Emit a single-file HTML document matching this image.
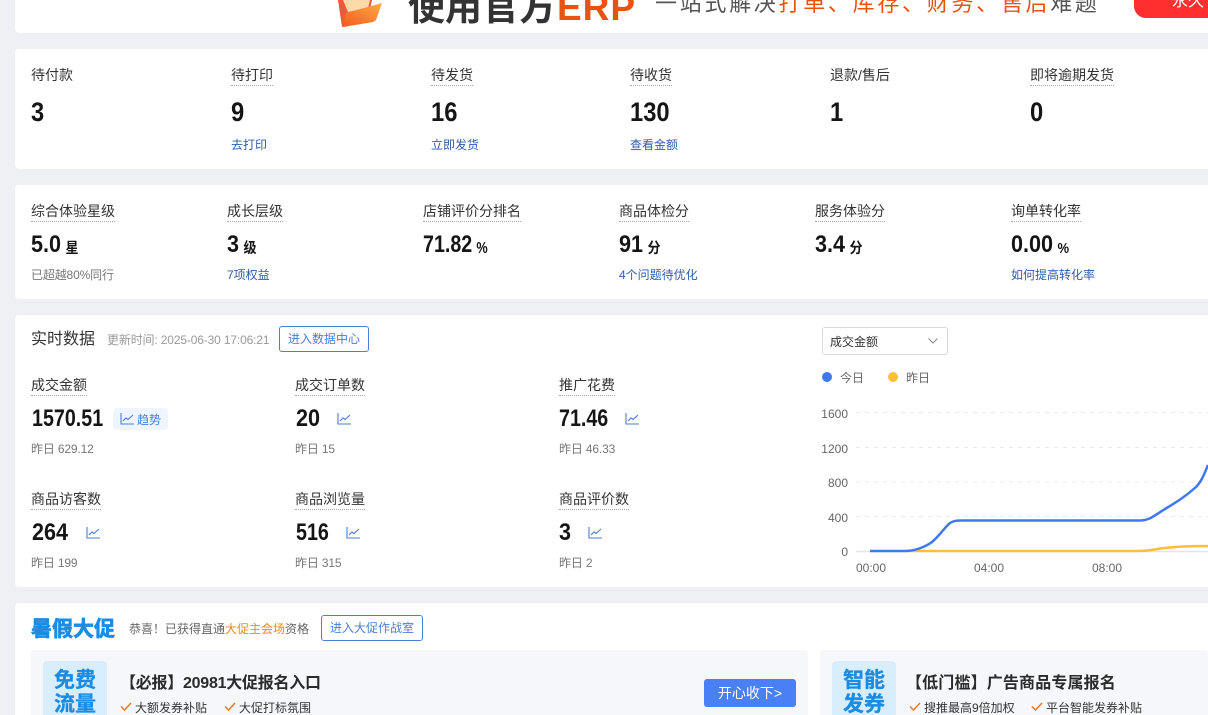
<!DOCTYPE html>
<html lang="zh"><head><meta charset="utf-8"><style>
html,body{margin:0;padding:0;width:1208px;height:715px;overflow:hidden;background:#eef0f3;font-family:"Liberation Sans","Noto Sans CJK SC",sans-serif;color:#333}
#root{position:relative;width:1208px;height:715px;overflow:hidden}
.card{position:absolute;left:15px;width:1200px;background:#fff;border-radius:4px}
.a{position:absolute;white-space:nowrap}
.l{position:absolute;white-space:nowrap;font-size:14px;line-height:18px;height:18px;color:#333;border-bottom:1px dotted #aaa;padding-bottom:1px}
.l.n{border-bottom:none}
.v{position:absolute;white-space:nowrap;font-weight:bold;font-size:27px;line-height:30px;color:#151515;transform:scaleX(.88);transform-origin:0 50%}
.v2{position:absolute;white-space:nowrap;font-weight:bold;font-size:24px;line-height:28px;color:#151515;transform:scaleX(.9);transform-origin:0 50%}
.v2 span{font-size:14.5px;margin-left:5px;position:relative;top:1px}
.nr{transform:scaleX(.82)}
.nr span{font-size:15.5px}
.lk{position:absolute;white-space:nowrap;font-size:12px;line-height:16px;color:#2f5ca8}
.g{position:absolute;white-space:nowrap;font-size:12px;line-height:16px;color:#777;letter-spacing:-.15px}
.btn{position:absolute;box-sizing:border-box;border:1px solid #4a7fd6;border-radius:3px;color:#4a7fd6;font-size:12px;text-align:center;background:#fff}
.tr{position:absolute;width:15px;height:13px}
.tag{position:absolute;width:64px;top:661px;height:60px;background:#d8eefc;border-radius:4px;color:#1b8ce3;font-weight:bold;font-size:21px;line-height:24px;text-align:center;padding-top:8px;box-sizing:content-box;-webkit-text-stroke:.3px #1b8ce3}
.sub{position:absolute;top:650px;height:70px;background:#f5f7fa;border-radius:3px}
.t{position:absolute;white-space:nowrap;font-size:16px;font-weight:bold;line-height:22px;color:#2b2b2b}
.ck{position:absolute;white-space:nowrap;font-size:12px;line-height:16px;color:#333}
</style></head><body><div id="root">

<div class="card" style="top:-10px;height:43px"></div>
<svg class="a" style="left:332px;top:0" width="55" height="30" viewBox="0 0 55 30"><defs><linearGradient id="f" x1="0" y1="1" x2="1" y2="0"><stop offset="0" stop-color="#f4591f"/><stop offset="1" stop-color="#fdab45"/></linearGradient></defs><path d="M6 0H40L38 10 14 14 10 27Z" fill="#ee5a3a"/><path d="M11 0H38L36 8 16 12Z" fill="#fbd9a8"/><path d="M14 13 50 3 44 20Q43 21 41 22L11 27Q10 27 10 26Z" fill="url(#f)"/></svg>
<div class="a" style="left:408px;top:-12px;font-size:37px;line-height:40px;font-weight:bold;color:#333">使用官方</div>
<div class="a" style="left:557px;top:-12px;font-size:37px;line-height:40px;font-weight:bold;color:#e8540f;letter-spacing:1px">ERP</div>
<div class="a" style="left:655px;top:-8px;font-size:22px;line-height:24px;color:#555;letter-spacing:2.7px">一站式解决<span style="color:#e8540f">打单、库存、财务、售后</span>难题</div>
<div class="a" style="left:1134px;top:-20px;width:90px;height:38px;background:#ff2f2f;border-radius:12px"></div>
<div class="a" style="left:1172px;top:-8px;font-size:16px;line-height:20px;color:#fff">永久</div>

<div class="card" style="top:49px;height:120px"></div>
<div class="l n" style="left:31px;top:66px">待付款</div>
<div class="l" style="left:231px;top:66px">待打印</div>
<div class="l" style="left:431px;top:66px">待发货</div>
<div class="l" style="left:630px;top:66px">待收货</div>
<div class="l n" style="left:830px;top:66px">退款/售后</div>
<div class="l" style="left:1030px;top:66px">即将逾期发货</div>
<div class="v" style="left:31px;top:97px">3</div>
<div class="v" style="left:231px;top:97px">9</div>
<div class="v" style="left:431px;top:97px">16</div>
<div class="v" style="left:630px;top:97px">130</div>
<div class="v" style="left:830px;top:97px">1</div>
<div class="v" style="left:1030px;top:97px">0</div>
<div class="lk" style="left:231px;top:137px">去打印</div>
<div class="lk" style="left:431px;top:137px">立即发货</div>
<div class="lk" style="left:630px;top:137px">查看金额</div>

<div class="card" style="top:185px;height:114px"></div>
<div class="l" style="left:31px;top:202px">综合体验星级</div>
<div class="l" style="left:227px;top:202px">成长层级</div>
<div class="l" style="left:423px;top:202px">店铺评价分排名</div>
<div class="l" style="left:619px;top:202px">商品体检分</div>
<div class="l" style="left:815px;top:202px">服务体验分</div>
<div class="l" style="left:1011px;top:202px">询单转化率</div>
<div class="v2" style="left:31px;top:231px">5.0<span>星</span></div>
<div class="v2" style="left:227px;top:231px">3<span>级</span></div>
<div class="v2 nr" style="left:423px;top:231px">71.82<span>%</span></div>
<div class="v2" style="left:619px;top:231px">91<span>分</span></div>
<div class="v2" style="left:815px;top:231px">3.4<span>分</span></div>
<div class="v2" style="left:1011px;top:231px">0.00<span>%</span></div>
<div class="g" style="left:31px;top:267px">已超越80%同行</div>
<div class="lk" style="left:227px;top:267px">7项权益</div>
<div class="lk" style="left:619px;top:267px">4个问题待优化</div>
<div class="lk" style="left:1011px;top:267px">如何提高转化率</div>

<div class="card" style="top:315px;height:272px"></div>
<div class="a" style="left:31px;top:329px;font-size:16px;line-height:22px;color:#333">实时数据</div>
<div class="a" style="left:107px;top:332px;font-size:12px;line-height:16px;color:#999;letter-spacing:-.15px">更新时间: 2025-06-30 17:06:21</div>
<div class="btn" style="left:279px;top:326px;width:90px;height:26px;line-height:25px">进入数据中心</div>

<div class="l" style="left:31px;top:376px">成交金额</div>
<div class="l" style="left:295px;top:376px">成交订单数</div>
<div class="l" style="left:559px;top:376px">推广花费</div>
<div class="v2 nr" style="left:32px;top:405px">1570.51</div>
<div class="v2" style="left:296px;top:405px">20</div>
<div class="v2 nr" style="left:559px;top:405px">71.46</div>
<div class="a" style="left:113px;top:408px;width:55px;height:22px;background:#eef5fe;border-radius:4px"></div>
<svg class="tr" style="left:120px;top:412px" viewBox="0 0 15 13" fill="none" stroke="#4a7fd6" stroke-width="1.1"><path d="M1 1V12H14M3 9 6 6 8 7.5 13 3"/></svg>
<div class="a" style="left:137px;top:412px;font-size:12px;line-height:16px;color:#4a7fd6">趋势</div>
<svg class="tr" style="left:337px;top:412px" viewBox="0 0 15 13" fill="none" stroke="#4a7fd6" stroke-width="1.1"><path d="M1 1V12H14M3 9 6 6 8 7.5 13 3"/></svg>
<svg class="tr" style="left:625px;top:412px" viewBox="0 0 15 13" fill="none" stroke="#4a7fd6" stroke-width="1.1"><path d="M1 1V12H14M3 9 6 6 8 7.5 13 3"/></svg>
<div class="g" style="left:31px;top:441px">昨日 629.12</div>
<div class="g" style="left:295px;top:441px">昨日 15</div>
<div class="g" style="left:559px;top:441px">昨日 46.33</div>

<div class="l" style="left:31px;top:490px">商品访客数</div>
<div class="l" style="left:295px;top:490px">商品浏览量</div>
<div class="l" style="left:559px;top:490px">商品评价数</div>
<div class="v2" style="left:32px;top:519px">264</div>
<div class="v2 nr" style="left:296px;top:519px">516</div>
<div class="v2" style="left:559px;top:519px">3</div>
<svg class="tr" style="left:86px;top:526px" viewBox="0 0 15 13" fill="none" stroke="#4a7fd6" stroke-width="1.1"><path d="M1 1V12H14M3 9 6 6 8 7.5 13 3"/></svg>
<svg class="tr" style="left:346px;top:526px" viewBox="0 0 15 13" fill="none" stroke="#4a7fd6" stroke-width="1.1"><path d="M1 1V12H14M3 9 6 6 8 7.5 13 3"/></svg>
<svg class="tr" style="left:588px;top:526px" viewBox="0 0 15 13" fill="none" stroke="#4a7fd6" stroke-width="1.1"><path d="M1 1V12H14M3 9 6 6 8 7.5 13 3"/></svg>
<div class="g" style="left:31px;top:555px">昨日 199</div>
<div class="g" style="left:295px;top:555px">昨日 315</div>
<div class="g" style="left:559px;top:555px">昨日 2</div>

<div class="a" style="left:822px;top:327px;width:126px;height:28px;box-sizing:border-box;border:1px solid #d9d9d9;border-radius:3px;background:#fff"></div>
<div class="a" style="left:830px;top:334px;font-size:12px;line-height:16px;color:#333">成交金额</div>
<svg class="a" style="left:927px;top:337px" width="12" height="8" viewBox="0 0 12 8" fill="none" stroke="#888"><path d="M1.5 1.5 6 6 10.500 1.500"/></svg>
<div class="a" style="left:822px;top:372px;width:10px;height:10px;border-radius:50%;background:#3f78f0"></div>
<div class="a" style="left:840px;top:370px;font-size:12px;line-height:16px;color:#666">今日</div>
<div class="a" style="left:888px;top:372px;width:10px;height:10px;border-radius:50%;background:#fdbe3d"></div>
<div class="a" style="left:906px;top:370px;font-size:12px;line-height:16px;color:#666">昨日</div>

<svg class="a" style="left:800px;top:400px" width="408" height="180" viewBox="800 400 408 180">
<g stroke="#eaeaea" stroke-dasharray="4 5"><path d="M856 412.500H1208M856 447.500H1208M856 482H1208M856 516.500H1208"/></g>
<path d="M856 551.500H1208" stroke="#e6e6e6" stroke-width="1.500"/>
<g font-family="Liberation Sans,sans-serif" font-size="12" fill="#666" text-anchor="end">
<text x="848" y="418">1600</text><text x="848" y="453">1200</text><text x="848" y="487">800</text><text x="848" y="522">400</text><text x="848" y="556">0</text></g>
<g font-family="Liberation Sans,sans-serif" font-size="12" fill="#666" text-anchor="middle">
<text x="871" y="572">00:00</text><text x="989" y="572">04:00</text><text x="1107" y="572">08:00</text></g>
<path d="M905 551H1138C1150 551 1155 549 1165 548C1178 546.500 1190 546 1208 546" fill="none" stroke="#fdbe3d" stroke-width="2.500"/>
<path d="M870 551H905C915 551 925 547 932 542C940 535 945 527 950 523C954 520.500 957 520.500 962 520.500H1140C1150 520.500 1155 515 1165 509C1175 503 1185 497 1196 487C1202 481 1205 472 1208 465" fill="none" stroke="#3f78f0" stroke-width="2.500"/>
</svg>

<div class="card" style="top:603px;height:120px"></div>
<div class="a" style="left:31px;top:617px;font-size:21px;line-height:25px;font-weight:bold;color:#1b8ce3;-webkit-text-stroke:.7px #1b8ce3">暑假大促</div>
<div class="a" style="left:129px;top:621px;font-size:12px;line-height:16px;color:#666">恭喜！已获得直通<span style="color:#e88a1a">大促主会场</span>资格</div>
<div class="btn" style="left:321px;top:615px;width:102px;height:26px;line-height:25px">进入大促作战室</div>

<div class="sub" style="left:31px;width:777px"></div>
<div class="sub" style="left:820px;width:388px"></div>
<div class="tag" style="left:43px">免费<br>流量</div>
<div class="tag" style="left:832px">智能<br>发券</div>
<div class="t" style="left:120px;top:673px;letter-spacing:-.25px">【必报】20981大促报名入口</div>
<div class="t" style="left:906px;top:673px;letter-spacing:.15px">【低门槛】广告商品专属报名</div>
<svg class="a" style="left:120px;top:702px" width="12" height="10" viewBox="0 0 12 10" fill="none" stroke="#ef7a1f" stroke-width="1.500"><path d="M1 4.500 4.500 8 11 1"/></svg>
<div class="ck" style="left:135px;top:700px">大额发券补贴</div>
<svg class="a" style="left:224px;top:702px" width="12" height="10" viewBox="0 0 12 10" fill="none" stroke="#ef7a1f" stroke-width="1.500"><path d="M1 4.500 4.500 8 11 1"/></svg>
<div class="ck" style="left:239px;top:700px">大促打标氛围</div>
<svg class="a" style="left:909px;top:702px" width="12" height="10" viewBox="0 0 12 10" fill="none" stroke="#ef7a1f" stroke-width="1.500"><path d="M1 4.500 4.500 8 11 1"/></svg>
<div class="ck" style="left:924px;top:700px">搜推最高9倍加权</div>
<svg class="a" style="left:1031px;top:702px" width="12" height="10" viewBox="0 0 12 10" fill="none" stroke="#ef7a1f" stroke-width="1.500"><path d="M1 4.500 4.500 8 11 1"/></svg>
<div class="ck" style="left:1046px;top:700px">平台智能发券补贴</div>
<div class="a" style="left:704px;top:679px;width:92px;height:28px;background:#4a80f5;border-radius:3px;color:#fff;font-size:14px;line-height:28px;text-align:center">开心收下&gt;</div>
</div></body></html>
